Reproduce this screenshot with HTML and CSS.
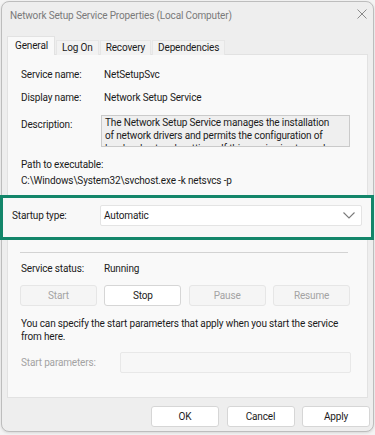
FILE: index.html
```html
<!DOCTYPE html>
<html lang="en">

<head>
    <meta charset="UTF-8" />
    <meta name="viewport" content="width=device-width, initial-scale=1" />
    <title>Network Setup Service Properties</title>
    <link rel="stylesheet" href="styles.css">
</head>

<body>

    <div class="window">
        <div class="titlebar">
            <span class="title">Network Setup Service Properties (Local Computer)</span>
            <svg class="close" width="10" height="10" viewBox="0 0 10 10">
                <path d="M0.5 0.5 L9.5 9.5 M9.5 0.5 L0.5 9.5" stroke="#8a8a8a" stroke-width="1" fill="none" />
            </svg>
        </div>

        <div class="tabs">
            <div class="tab active">General</div>
            <div class="tab">Log On</div>
            <div class="tab">Recovery</div>
            <div class="tab">Dependencies</div>
        </div>

        <div class="panel">
            <div class="field first">
                <div class="label">Service name:</div>
                <div class="value">NetSetupSvc</div>
            </div>
            <div class="field">
                <div class="label">Display name:</div>
                <div class="value">Network Setup Service</div>
            </div>
            <div class="field desc-row">
                <div class="label">Description:</div>
                <div class="desc">The Network Setup Service manages the installation<br>of network drivers and permits the configuration of<br>low-level network settings. If this service is stopped,<br>any driver installations that are in-progress may be<br>cancelled.</div>
            </div>

            <div class="path">
                <div>Path to executable:</div>
                <div>C:\Windows\System32\svchost.exe -k netsvcs -p</div>
            </div>

            <!-- 강조 표시된 시작 유형 -->
            <div class="startup">
                <div class="startup-label">Startup type:</div>
                <div class="select">
                    <span>Automatic</span>
                    <svg width="12" height="7" viewBox="0 0 12 7">
                        <path d="M0.5 0.5 L6 6 L11.5 0.5" stroke="#7a7a7a" stroke-width="1.1" fill="none" />
                    </svg>
                </div>
            </div>

            <div class="divider"></div>

            <div class="field status">
                <div class="label">Service status:</div>
                <div class="value">Running</div>
            </div>

            <div class="controls">
                <button class="btn" disabled>Start</button>
                <button class="btn">Stop</button>
                <button class="btn" disabled>Pause</button>
                <button class="btn" disabled>Resume</button>
            </div>

            <p class="hint">You can specify the start parameters that apply when you start the service from here.</p>

            <div class="params">
                <div class="params-label">Start parameters:</div>
                <div class="params-input"></div>
            </div>
        </div>

        <div class="footer">
            <button class="btn dlg">OK</button>
            <button class="btn dlg">Cancel</button>
            <button class="btn dlg">Apply</button>
        </div>
    </div>

</body>

</html>
```

FILE: styles.css
```css
html,
body {
    margin: 0;
    padding: 0;
}
body {
    background: #f4f4f4;
    padding: 1px 0 0 1px;
    width: 375px;
    height: 435px;
    box-sizing: border-box;
    font-family: Roboto, 'Noto Sans', Arial, sans-serif;
    font-size: 10px;
    letter-spacing: -0.15px;
    color: #1b1b1b;
}
.window {
    width: 373px;
    height: 431px;
    box-sizing: border-box;
    border: 1px solid #bdbdbd;
    border-radius: 8px;
    background: #eeeeee;
    box-shadow: 0 1px 3px rgba(0, 0, 0, 0.12);
}
/* 타이틀 바 */
.titlebar {
    height: 26px;
    display: flex;
    align-items: center;
    justify-content: space-between;
    padding: 0 6px 0 8px;
}
.title { color: #7a7a7a; font-size: 10px; }
.close { margin-top: -2px; }
/* 탭 */
.tabs {
    display: flex;
    align-items: flex-end;
    padding: 8px 0 0 5px;
    margin-bottom: -1px;
    position: relative;
    z-index: 1;
}
.tab {
    height: 15px;
    line-height: 14px;
    padding: 0 5px;
    background: #f2f2f2;
    border: 1px solid #e6e6e6;
    border-bottom: none;
    box-sizing: border-box;
    color: #1b1b1b;
}
.tab + .tab { margin-left: 1px; }
.tab.active {
    height: 19px;
    line-height: 17px;
    padding: 0 6px 0 7px;
    background: #f9f9f9;
    border-color: #e2e2e2;
}
/* 패널 */
.panel {
    margin-left: 5px;
    width: 361px;
    height: 344px;
    box-sizing: border-box;
    border: 1px solid #e2e2e2;
    background: #f9f9f9;
    padding: 13px 0 0 13px;
}
.field { display: flex; line-height: 14px; margin-top: 9px; }
.field.first { margin-top: 0; }
.label { width: 83px; flex: none; }
.desc-row { margin-top: 10px; }
.desc-row .label { padding-top: 3px; }
.desc {
    margin-left: -3px;
    width: 249px;
    height: 32px;
    box-sizing: border-box;
    border: 1px solid #cacaca;
    background: #efefef;
    padding: 0 4px 0 3px;
    line-height: 13px;
    white-space: nowrap;
    overflow: hidden;
}
.path { margin-top: 10px; line-height: 16px; }
.startup {
    margin: 6px -7px 0 -21px;
    height: 45px;
    box-sizing: border-box;
    border: 3px solid #13866a;
    background: #f8f8f8;
    display: flex;
    align-items: flex-start;
    padding: 7px 9px 0 9px;
}
.startup-label { width: 88px; line-height: 21px; }
.select {
    width: 262px;
    height: 21px;
    box-sizing: border-box;
    background: #ffffff;
    border: 1px solid #e4e4e4;
    border-radius: 2px;
    display: flex;
    align-items: center;
    justify-content: space-between;
    padding: 0 6px 0 3px;
}
.divider {
    margin: 12px 0 0 -1px;
    width: 328px;
    height: 1px;
    background: #d3d3d3;
}
.status { margin-top: 9px; }
.controls {
    display: grid;
    grid-template-columns: repeat(4, 1fr);
    gap: 7.5px;
    width: 330px;
    margin: 9px 0 0 -1px;
}
.btn {
    height: 21px;
    box-sizing: border-box;
    background: #ffffff;
    border: 1px solid #d6d6d6;
    border-radius: 3px;
    font-family: inherit;
    font-size: 10px;
    letter-spacing: inherit;
    color: #1b1b1b;
    padding: 0;
}
.btn:disabled {
    background: #f5f5f5;
    border-color: #e6e6e6;
    color: #a3a3a3;
}
.hint {
    margin: 11px 0 0 0;
    width: 330px;
    line-height: 13px;
}
.params {
    display: flex;
    align-items: center;
    margin-top: 9px;
}
.params-label { width: 99px; color: #a3a3a3; }
.params-input {
    width: 231px;
    height: 21px;
    box-sizing: border-box;
    background: #f7f7f7;
    border: 1px solid #e8e8e8;
    border-radius: 2px;
}
/* 하단 버튼 */
.footer {
    display: flex;
    justify-content: flex-end;
    gap: 7.5px;
    margin: 8px 3px 0 0;
}
.btn.dlg { width: 68px; }
```
